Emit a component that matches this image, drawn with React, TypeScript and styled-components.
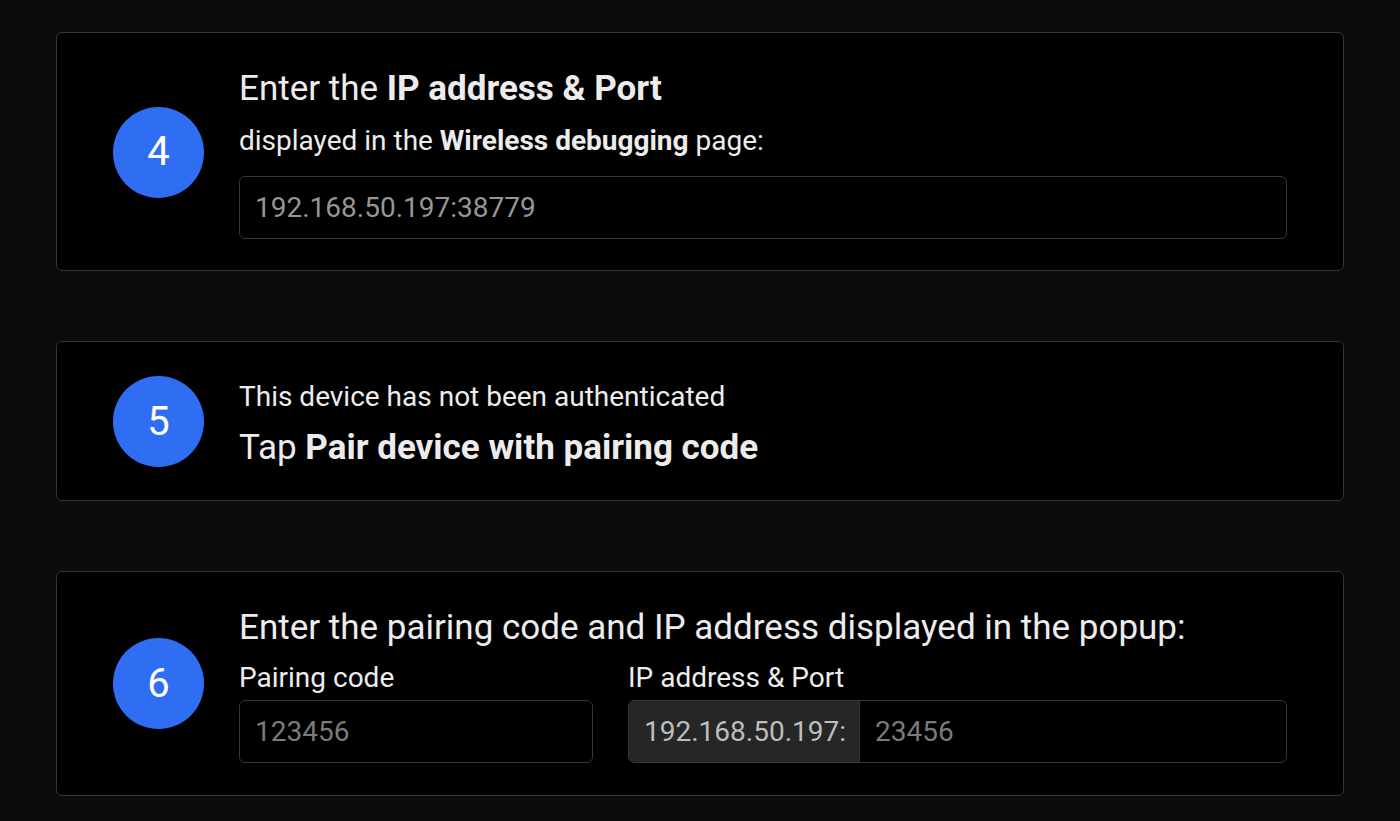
import React from "react";
import styled, { createGlobalStyle } from "styled-components";

const Global = createGlobalStyle`
  html, body { margin: 0; padding: 0; background: #0c0c0c; }
  body { font-family: Roboto, "Noto Sans", sans-serif; color: #ececec; }
  * { box-sizing: border-box; }
`;

const Page = styled.div`
  padding: 32px 56px 26px 56px;
  display: flex;
  flex-direction: column;
  gap: 70px;
`;

const Card = styled.section<{ $pb?: number }>`
  background: #000;
  border: 1px solid #363636;
  border-radius: 6px;
  padding: 32px 56px ${(p) => p.$pb ?? 31}px 56px;
  display: flex;
  align-items: center;
  gap: 35px;
`;

const Step = styled.div`
  flex: 0 0 91px;
  width: 91px;
  height: 91px;
  border-radius: 50%;
  background: #2f6ef2;
  color: #fff;
  font-size: 40px;
  display: flex;
  align-items: center;
  justify-content: center;
  line-height: 1;
`;

const Body = styled.div`
  flex: 1;
  display: flex;
  flex-direction: column;
  min-width: 0;
  padding-top: 3px;
`;

const Title = styled.div<{ $mt?: number }>`
  font-size: 35px;
  line-height: 42px;
  margin-top: ${(p) => p.$mt ?? 0}px;
  b { font-weight: 700; }
`;

const Sub = styled.div<{ $mt?: number }>`
  font-size: 28px;
  line-height: 34px;
  margin-top: ${(p) => p.$mt ?? 0}px;
  b { font-weight: 700; }
`;

const Field = styled.div<{ $mt?: number }>`
  margin-top: ${(p) => p.$mt ?? 0}px;
  height: 63px;
  border: 1px solid #363636;
  border-radius: 6px;
  display: flex;
  overflow: hidden;
`;

const Addon = styled.span`
  background: #262626;
  color: #bdbdbd;
  font-size: 28px;
  display: flex;
  align-items: center;
  padding: 0 13px 0 15px;
  border-right: 1px solid #363636;
`;

const Input = styled.input<{ $light?: boolean }>`
  flex: 1;
  min-width: 0;
  background: transparent;
  border: none;
  outline: none;
  color: #ececec;
  font-family: Roboto, sans-serif;
  font-size: 28px;
  padding: 0 15px;
  &::placeholder { color: ${(p) => (p.$light ? "#969696" : "#7a7a7a")}; }
`;

const Columns = styled.div`
  display: grid;
  grid-template-columns: 354px 1fr;
  gap: 35px;
  margin-top: 12px;
`;

const Column = styled.div`
  display: flex;
  flex-direction: column;
`;

export default function App() {
  return (
    <>
      <Global />
      <Page>
        <Card>
          <Step>4</Step>
          <Body>
            <Title>
              Enter the <b>IP address &amp; Port</b>
            </Title>
            <Sub $mt={14}>
              displayed in the <b>Wireless debugging</b> page:
            </Sub>
            <Field $mt={18}>
              <Input $light placeholder="192.168.50.197:38779" />
            </Field>
          </Body>
        </Card>
        <Card>
          <Step>5</Step>
          <Body>
            <Sub $mt={3}>This device has not been authenticated</Sub>
            <Title $mt={13}>
              Tap <b>Pair device with pairing code</b>
            </Title>
          </Body>
        </Card>
        <Card $pb={32}>
          <Step>6</Step>
          <Body>
            <Title>Enter the pairing code and IP address displayed in the popup:</Title>
            <Columns>
              <Column>
                <Sub>Pairing code</Sub>
                <Field $mt={5}>
                  <Input placeholder="123456" />
                </Field>
              </Column>
              <Column>
                <Sub>IP address &amp; Port</Sub>
                <Field $mt={5}>
                  <Addon>192.168.50.197:</Addon>
                  <Input placeholder="23456" />
                </Field>
              </Column>
            </Columns>
          </Body>
        </Card>
      </Page>
    </>
  );
}
